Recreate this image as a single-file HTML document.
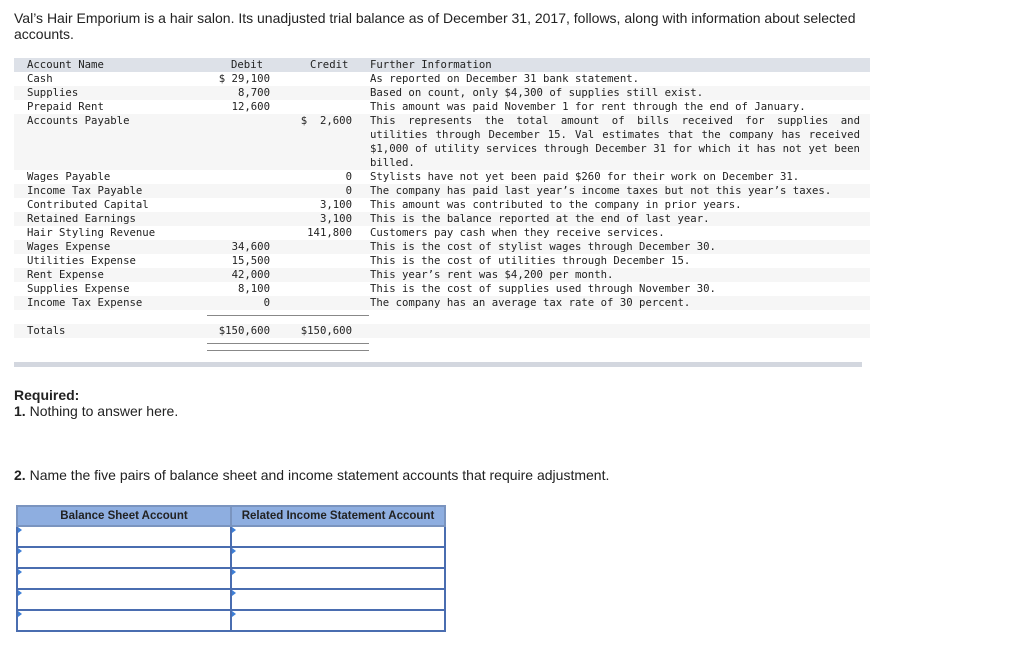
<!DOCTYPE html>
<html><head><meta charset="utf-8"><style>
body{margin:0;width:1024px;height:656px;background:#fff;position:relative;font-family:"Liberation Sans",sans-serif;color:#222;overflow:hidden}
.p{position:absolute;font-size:14px;line-height:16px}
.r{position:absolute;left:14px;width:856px;height:14px}
.m{position:absolute;font-family:"DejaVu Sans Mono","Liberation Mono",monospace;font-size:10.65px;line-height:14px;white-space:pre;color:#222}
.n{left:27px}.d{right:754px;text-align:right}.c{right:672px;text-align:right}
.j{position:absolute;left:370px;width:490px;display:flex;justify-content:space-between;font-family:"DejaVu Sans Mono","Liberation Mono",monospace;font-size:10.65px;line-height:14px;color:#222}
.hl{position:absolute;left:207px;width:162px;height:1px;background:#888}
table{position:absolute;left:16px;top:505px;border-collapse:collapse;width:430px}
td,th{border:2px solid #4a6db0;height:19px;padding:0;position:relative}
th{background:#8eaee0;font-size:11.5px;font-weight:bold;color:#222;height:18px;border-color:#7a94bf}
td::before{content:"";position:absolute;left:0;top:0;border-left:4px solid #3d7fd6;border-top:3px solid transparent;border-bottom:3px solid transparent}
</style></head><body>
<div class="p" style="left:14px;top:10px;width:860px">Val’s Hair Emporium is a hair salon. Its unadjusted trial balance as of December 31, 2017, follows, along with information about selected accounts.</div>

<div class="r" style="top:58px;background:#dde1e8"></div>
<div class="r" style="top:86px;background:#f6f6f6"></div>
<div class="r" style="top:114px;height:56px;background:#f6f6f6"></div>
<div class="r" style="top:184px;background:#f6f6f6"></div>
<div class="r" style="top:212px;background:#f6f6f6"></div>
<div class="r" style="top:240px;background:#f6f6f6"></div>
<div class="r" style="top:268px;background:#f6f6f6"></div>
<div class="r" style="top:296px;background:#f6f6f6"></div>
<div class="r" style="top:324px;background:#f6f6f6"></div>

<div class="m n" style="top:58px">Account Name
Cash
Supplies
Prepaid Rent
Accounts Payable



Wages Payable
Income Tax Payable
Contributed Capital
Retained Earnings
Hair Styling Revenue
Wages Expense
Utilities Expense
Rent Expense
Supplies Expense
Income Tax Expense

Totals</div>
<div class="m" style="left:231px;top:58px">Debit</div>
<div class="m d" style="top:72px">$ 29,100
8,700
12,600









34,600
15,500
42,000
8,100
0

$150,600</div>
<div class="m" style="left:310px;top:58px">Credit</div>
<div class="m c" style="top:114px">$  2,600



0
0
3,100
3,100
141,800






$150,600</div>
<div class="m" style="left:370px;top:58px">Further Information
As reported on December 31 bank statement.
Based on count, only $4,300 of supplies still exist.
This amount was paid November 1 for rent through the end of January.</div>
<div class="j" style="top:114px"><span>This</span><span>represents</span><span>the</span><span>total</span><span>amount</span><span>of</span><span>bills</span><span>received</span><span>for</span><span>supplies</span><span>and</span></div>
<div class="j" style="top:128px"><span>utilities</span><span>through</span><span>December</span><span>15.</span><span>Val</span><span>estimates</span><span>that</span><span>the</span><span>company</span><span>has</span><span>received</span></div>
<div class="j" style="top:142px"><span>$1,000</span><span>of</span><span>utility</span><span>services</span><span>through</span><span>December</span><span>31</span><span>for</span><span>which</span><span>it</span><span>has</span><span>not</span><span>yet</span><span>been</span></div>
<div class="m" style="left:370px;top:156px">billed.
Stylists have not yet been paid $260 for their work on December 31.
The company has paid last year’s income taxes but not this year’s taxes.
This amount was contributed to the company in prior years.
This is the balance reported at the end of last year.
Customers pay cash when they receive services.
This is the cost of stylist wages through December 30.
This is the cost of utilities through December 15.
This year’s rent was $4,200 per month.
This is the cost of supplies used through November 30.
The company has an average tax rate of 30 percent.</div>
<div class="hl" style="top:315px"></div>
<div class="hl" style="top:343px"></div>
<div class="hl" style="top:350px"></div>
<div style="position:absolute;left:14px;top:362px;width:848px;height:5px;background:#d3d7df"></div>

<div class="p" style="left:14px;top:387px"><b>Required:</b><br><b>1.</b> Nothing to answer here.</div>
<div class="p" style="left:14px;top:467px"><b>2.</b> Name the five pairs of balance sheet and income statement accounts that require adjustment.</div>

<table>
<tr><th style="width:212px">Balance Sheet Account</th><th>Related Income Statement Account</th></tr>
<tr><td></td><td></td></tr>
<tr><td></td><td></td></tr>
<tr><td></td><td></td></tr>
<tr><td></td><td></td></tr>
<tr><td></td><td></td></tr>
</table>
</body></html>
